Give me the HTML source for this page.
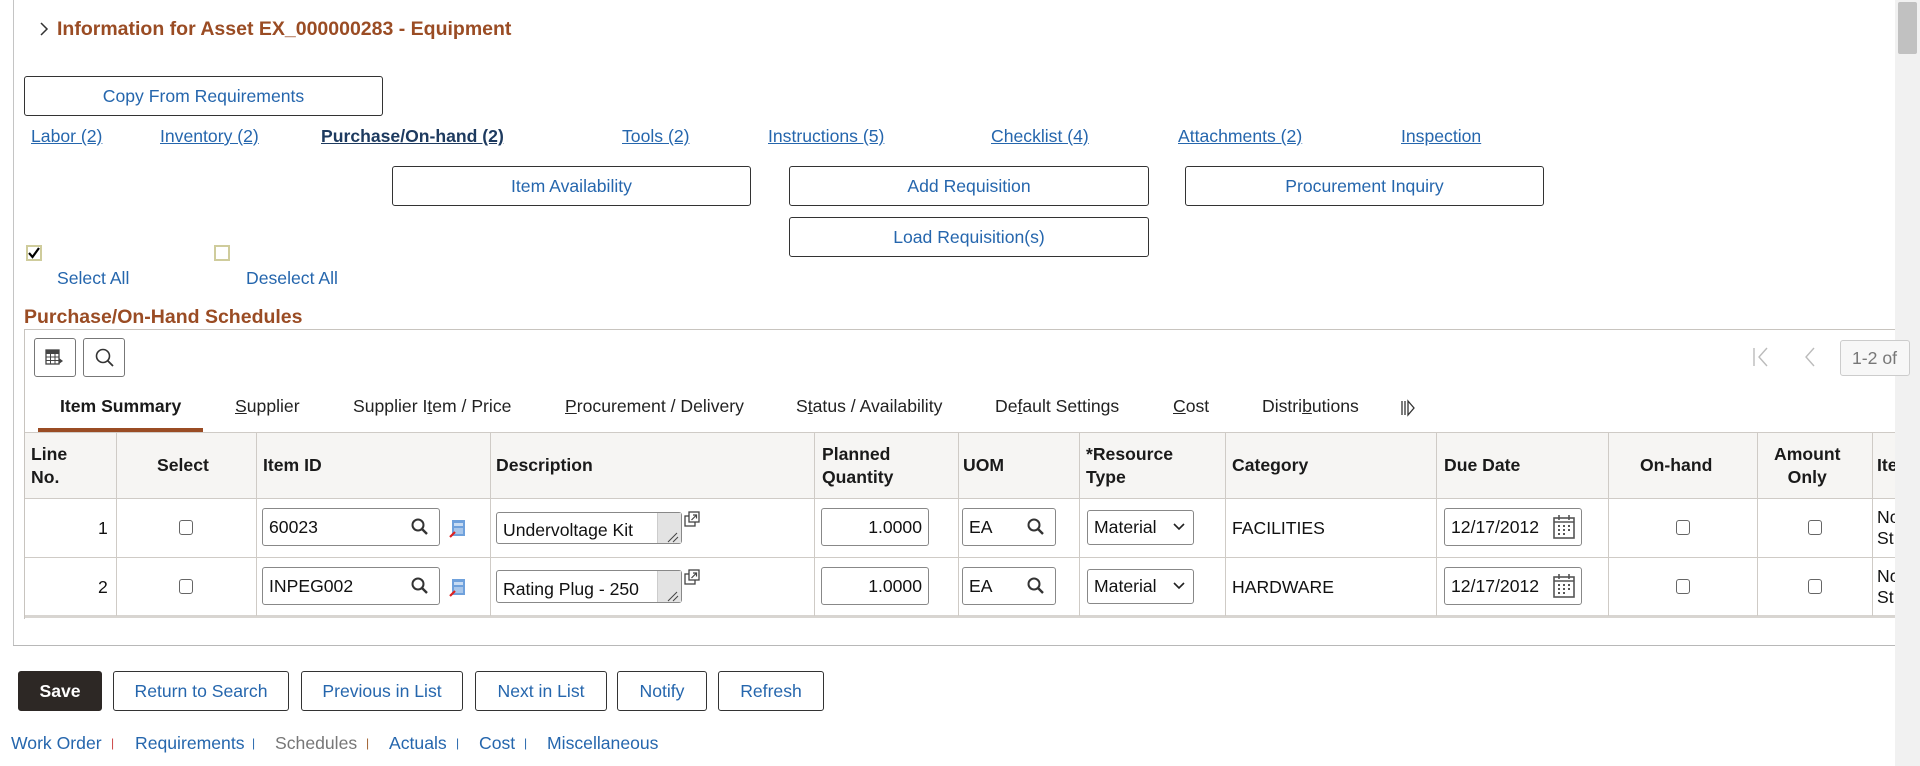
<!DOCTYPE html>
<html><head><meta charset="utf-8"><style>
*{box-sizing:border-box;margin:0;padding:0}
body{width:1920px;height:766px;overflow:hidden;background:#fff;font-family:"Liberation Sans",Arial,sans-serif;font-size:17.6px;color:#333;position:relative}
.a{position:absolute;white-space:nowrap}
.lk{color:#2566ad;text-decoration:underline}
.btn{position:absolute;border:1px solid #333;border-radius:3px;background:#fff;color:#2566ad;text-align:center;font-size:17.6px}
.brown{color:#9a4c24;font-weight:bold;font-size:19.5px}
.hd{position:absolute;font-weight:bold;color:#1a1a1a;line-height:23px}
.vl{position:absolute;width:1px;background:#cfcbc6}
.hl{position:absolute;height:1px;background:#cfcbc6}
.inp{position:absolute;border:1px solid #888;border-radius:3px;background:#fff;font-size:17.6px;color:#111;line-height:36px;padding-left:6px}
.cb{position:absolute;width:14px;height:15px;border:1.5px solid #666;border-radius:3px;background:#fff}
.tab{position:absolute;top:396px;color:#222;font-size:17.6px}
</style></head><body>
<div class="a" style="left:13px;top:0;width:1px;height:646px;background:#c4c4c4"></div>
<div class="a" style="left:13px;top:645px;width:1882px;height:1px;background:#b8b8b8"></div>
<div class="a" style="left:1895px;top:0;width:25px;height:766px;background:#f1f1f1"></div>
<div class="a" style="left:1898px;top:2px;width:19px;height:52px;background:#c1c1c1;border-radius:2px"></div>

<svg class="a" style="left:39px;top:21px" width="10" height="16"><path d="M2 2 L8 8 L2 14" fill="none" stroke="#333" stroke-width="1.5"/></svg>
<div class="a brown" style="left:57px;top:18px">Information for Asset EX_000000283 - Equipment</div>

<div class="btn" style="left:24px;top:76px;width:359px;height:40px;line-height:38px">Copy From Requirements</div>

<div class="a lk" style="left:31px;top:126px">Labor (2)</div>
<div class="a lk" style="left:160px;top:126px">Inventory (2)</div>
<div class="a lk" style="left:321px;top:126px;font-weight:bold;color:#1d3a5f">Purchase/On-hand (2)</div>
<div class="a lk" style="left:622px;top:126px">Tools (2)</div>
<div class="a lk" style="left:768px;top:126px">Instructions (5)</div>
<div class="a lk" style="left:991px;top:126px">Checklist (4)</div>
<div class="a lk" style="left:1178px;top:126px">Attachments (2)</div>
<div class="a lk" style="left:1401px;top:126px">Inspection</div>

<div class="btn" style="left:392px;top:166px;width:359px;height:40px;line-height:38px">Item Availability</div>
<div class="btn" style="left:789px;top:166px;width:360px;height:40px;line-height:38px">Add Requisition</div>
<div class="btn" style="left:1185px;top:166px;width:359px;height:40px;line-height:38px">Procurement Inquiry</div>
<div class="btn" style="left:789px;top:217px;width:360px;height:40px;line-height:38px">Load Requisition(s)</div>

<div class="a" style="left:26px;top:245px;width:16px;height:16px;border:2px solid #cfcc9c;background:#fff"></div>
<svg class="a" style="left:27px;top:246px" width="14" height="14"><path d="M2 7 L5.5 11 L12 2" fill="none" stroke="#000" stroke-width="2.2"/></svg>
<div class="a" style="left:214px;top:245px;width:16px;height:16px;border:2px solid #cfcc9c;background:#fff"></div>
<div class="a" style="left:57px;top:268px;color:#2566ad">Select All</div>
<div class="a" style="left:246px;top:268px;color:#2566ad">Deselect All</div>

<div class="a brown" style="left:24px;top:306px">Purchase/On-Hand Schedules</div>
<div class="a" style="left:24px;top:329px;width:1871px;height:1px;background:#c8c4bf"></div>
<div class="a" style="left:24px;top:329px;width:1px;height:290px;background:#c8c4bf"></div>

<div class="a" style="left:34px;top:338px;width:42px;height:39px;border:1px solid #777;border-radius:3px"></div>
<svg class="a" style="left:45px;top:348px" width="20" height="20"><rect x="1" y="2" width="13" height="14" fill="none" stroke="#444" stroke-width="1.3"/><path d="M1 5.5H14M1 9H14M1 12.5H14M5.5 2V16M10 2V16" stroke="#444" stroke-width="1"/><rect x="1" y="2" width="13" height="3" fill="#444"/><path d="M14 10 L18 13 L14 16Z" fill="#444"/></svg>
<div class="a" style="left:83px;top:338px;width:42px;height:39px;border:1px solid #777;border-radius:3px"></div>
<svg class="a" style="left:94px;top:347px" width="22" height="22"><circle cx="9" cy="9" r="6.5" fill="none" stroke="#333" stroke-width="1.6"/><path d="M13.5 13.5 L19 19" stroke="#333" stroke-width="1.8"/></svg>

<svg class="a" style="left:1752px;top:346px" width="18" height="22"><path d="M2 2V20M15 2 L7 11 L15 20" fill="none" stroke="#bbb" stroke-width="1.4"/></svg>
<svg class="a" style="left:1803px;top:346px" width="14" height="22"><path d="M11 2 L3 11 L11 20" fill="none" stroke="#bbb" stroke-width="1.4"/></svg>
<div class="a" style="left:1840px;top:340px;width:70px;height:36px;border:1px solid #ccc;border-radius:3px;background:#f7f7f7;color:#777;padding-left:11px;line-height:34px">1-2 of</div>

<div class="tab" style="left:60px;font-weight:bold;color:#1a1a1a">Item Summary</div>
<div class="a" style="left:38px;top:428px;width:165px;height:4px;background:#9a4c24"></div>
<div class="tab" style="left:235px"><u>S</u>upplier</div>
<div class="tab" style="left:353px">Supplier I<u>t</u>em / Price</div>
<div class="tab" style="left:565px"><u>P</u>rocurement / Delivery</div>
<div class="tab" style="left:796px">S<u>t</u>atus / Availability</div>
<div class="tab" style="left:995px">De<u>f</u>ault Settings</div>
<div class="tab" style="left:1173px"><u>C</u>ost</div>
<div class="tab" style="left:1262px">Distri<u>b</u>utions</div>
<svg class="a" style="left:1400px;top:399px" width="16" height="18"><path d="M2 2V16M5 2V16M8 2 L14 9 L8 16Z" fill="none" stroke="#333" stroke-width="1.3"/></svg>

<div class="a" style="left:25px;top:432px;width:1870px;height:66px;background:#f6f5f3"></div>
<div class="hl" style="left:25px;top:432px;width:1870px"></div>
<div class="hl" style="left:25px;top:498px;width:1870px"></div>
<div class="hl" style="left:25px;top:557px;width:1870px"></div>
<div class="hl" style="left:25px;top:615px;width:1870px;height:3px;background:#d8d5d1"></div>
<div class="vl" style="left:116px;top:432px;height:184px"></div>
<div class="vl" style="left:256px;top:432px;height:184px"></div>
<div class="vl" style="left:490px;top:432px;height:184px"></div>
<div class="vl" style="left:814px;top:432px;height:184px"></div>
<div class="vl" style="left:958px;top:432px;height:184px"></div>
<div class="vl" style="left:1079px;top:432px;height:184px"></div>
<div class="vl" style="left:1225px;top:432px;height:184px"></div>
<div class="vl" style="left:1436px;top:432px;height:184px"></div>
<div class="vl" style="left:1608px;top:432px;height:184px"></div>
<div class="vl" style="left:1757px;top:432px;height:184px"></div>
<div class="vl" style="left:1872px;top:432px;height:184px"></div>

<div class="hd" style="left:31px;top:443px">Line<br>No.</div>
<div class="hd" style="left:157px;top:454px">Select</div>
<div class="hd" style="left:263px;top:454px">Item ID</div>
<div class="hd" style="left:496px;top:454px">Description</div>
<div class="hd" style="left:822px;top:443px">Planned<br>Quantity</div>
<div class="hd" style="left:963px;top:454px">UOM</div>
<div class="hd" style="left:1086px;top:443px">*Resource<br>Type</div>
<div class="hd" style="left:1232px;top:454px">Category</div>
<div class="hd" style="left:1444px;top:454px">Due Date</div>
<div class="hd" style="left:1640px;top:454px">On-hand</div>
<div class="hd" style="left:1774px;top:443px;text-align:center">Amount<br>Only</div>
<div class="hd" style="left:1877px;top:454px;width:18px;overflow:hidden">Item</div>

<!-- row 1 -->
<div class="a" style="left:98px;top:518px;color:#111">1</div>
<div class="cb" style="left:179px;top:520px"></div>
<div class="inp" style="left:262px;top:508px;width:178px;height:38px">60023</div>
<svg class="a" style="left:410px;top:517px" width="20" height="20"><circle cx="8" cy="8" r="5.5" fill="none" stroke="#333" stroke-width="2"/><path d="M12 12 L17 17" stroke="#333" stroke-width="2.4"/></svg>
<svg class="a" style="left:449px;top:519px" width="17" height="19"><rect x="3" y="1" width="13" height="16" fill="#6fa1dc"/><rect x="5" y="4" width="9" height="3" fill="#c8dcf3"/><rect x="5" y="9" width="9" height="6" fill="#a8c6ea"/><path d="M1 18 L6 13" stroke="#d22" stroke-width="2.2"/></svg>
<div class="inp" style="left:496px;top:512px;width:186px;height:32px;line-height:34px;font-size:17.6px">Undervoltage Kit</div>
<div class="a" style="left:657px;top:513px;width:24px;height:30px;background:#e3e3e3;border-left:1px solid #ccc"></div>
<svg class="a" style="left:666px;top:531px" width="14" height="12"><path d="M2 11 L11 2M7 11 L12 6" stroke="#444" stroke-width="1"/></svg>
<svg class="a" style="left:684px;top:511px" width="17" height="17"><rect x="1" y="5" width="10" height="10" fill="#fff" stroke="#444" stroke-width="1.3"/><rect x="5" y="1" width="10" height="10" fill="#fff" stroke="#444" stroke-width="1.3"/><path d="M7.5 9 L12.5 4M9 4H12.5V7.5" fill="none" stroke="#444" stroke-width="1.2"/></svg>
<div class="inp" style="left:821px;top:508px;width:108px;height:38px;text-align:right;padding-right:6px">1.0000</div>
<div class="inp" style="left:962px;top:508px;width:94px;height:38px">EA</div>
<svg class="a" style="left:1026px;top:517px" width="20" height="20"><circle cx="8" cy="8" r="5.5" fill="none" stroke="#333" stroke-width="2"/><path d="M12 12 L17 17" stroke="#333" stroke-width="2.4"/></svg>
<div class="inp" style="left:1087px;top:510px;width:107px;height:35px;line-height:33px">Material</div>
<svg class="a" style="left:1173px;top:522px" width="12" height="10"><path d="M1 2 L6 7 L11 2" fill="none" stroke="#222" stroke-width="1.6"/></svg>
<div class="a" style="left:1232px;top:518px;color:#111">FACILITIES</div>
<div class="inp" style="left:1444px;top:508px;width:138px;height:38px">12/17/2012</div>
<svg class="a" style="left:1552px;top:513px" width="24" height="28"><rect x="2" y="5" width="20" height="20" fill="none" stroke="#555" stroke-width="1.6"/><path d="M2 9H22M7 2V7M17 2V7" stroke="#555" stroke-width="1.6"/><g fill="#555"><rect x="6" y="12" width="2" height="2"/><rect x="11" y="12" width="2" height="2"/><rect x="16" y="12" width="2" height="2"/><rect x="6" y="16" width="2" height="2"/><rect x="11" y="16" width="2" height="2"/><rect x="16" y="16" width="2" height="2"/><rect x="6" y="20" width="2" height="2"/><rect x="11" y="20" width="2" height="2"/></g></svg>
<div class="cb" style="left:1676px;top:520px"></div>
<div class="cb" style="left:1808px;top:520px"></div>
<div class="a" style="left:1877px;top:507px;width:18px;overflow:hidden;color:#111;line-height:21px">No<br>St</div>

<!-- row 2 -->
<div class="a" style="left:98px;top:577px;color:#111">2</div>
<div class="cb" style="left:179px;top:579px"></div>
<div class="inp" style="left:262px;top:567px;width:178px;height:38px">INPEG002</div>
<svg class="a" style="left:410px;top:576px" width="20" height="20"><circle cx="8" cy="8" r="5.5" fill="none" stroke="#333" stroke-width="2"/><path d="M12 12 L17 17" stroke="#333" stroke-width="2.4"/></svg>
<svg class="a" style="left:449px;top:578px" width="17" height="19"><rect x="3" y="1" width="13" height="16" fill="#6fa1dc"/><rect x="5" y="4" width="9" height="3" fill="#c8dcf3"/><rect x="5" y="9" width="9" height="6" fill="#a8c6ea"/><path d="M1 18 L6 13" stroke="#d22" stroke-width="2.2"/></svg>
<div class="inp" style="left:496px;top:570px;width:186px;height:33px;line-height:36px;font-size:17.6px">Rating Plug - 250</div>
<div class="a" style="left:657px;top:571px;width:24px;height:31px;background:#e3e3e3;border-left:1px solid #ccc"></div>
<svg class="a" style="left:666px;top:590px" width="14" height="12"><path d="M2 11 L11 2M7 11 L12 6" stroke="#444" stroke-width="1"/></svg>
<svg class="a" style="left:684px;top:569px" width="17" height="17"><rect x="1" y="5" width="10" height="10" fill="#fff" stroke="#444" stroke-width="1.3"/><rect x="5" y="1" width="10" height="10" fill="#fff" stroke="#444" stroke-width="1.3"/><path d="M7.5 9 L12.5 4M9 4H12.5V7.5" fill="none" stroke="#444" stroke-width="1.2"/></svg>
<div class="inp" style="left:821px;top:567px;width:108px;height:38px;text-align:right;padding-right:6px">1.0000</div>
<div class="inp" style="left:962px;top:567px;width:94px;height:38px">EA</div>
<svg class="a" style="left:1026px;top:576px" width="20" height="20"><circle cx="8" cy="8" r="5.5" fill="none" stroke="#333" stroke-width="2"/><path d="M12 12 L17 17" stroke="#333" stroke-width="2.4"/></svg>
<div class="inp" style="left:1087px;top:569px;width:107px;height:35px;line-height:33px">Material</div>
<svg class="a" style="left:1173px;top:581px" width="12" height="10"><path d="M1 2 L6 7 L11 2" fill="none" stroke="#222" stroke-width="1.6"/></svg>
<div class="a" style="left:1232px;top:577px;color:#111">HARDWARE</div>
<div class="inp" style="left:1444px;top:567px;width:138px;height:38px">12/17/2012</div>
<svg class="a" style="left:1552px;top:572px" width="24" height="28"><rect x="2" y="5" width="20" height="20" fill="none" stroke="#555" stroke-width="1.6"/><path d="M2 9H22M7 2V7M17 2V7" stroke="#555" stroke-width="1.6"/><g fill="#555"><rect x="6" y="12" width="2" height="2"/><rect x="11" y="12" width="2" height="2"/><rect x="16" y="12" width="2" height="2"/><rect x="6" y="16" width="2" height="2"/><rect x="11" y="16" width="2" height="2"/><rect x="16" y="16" width="2" height="2"/><rect x="6" y="20" width="2" height="2"/><rect x="11" y="20" width="2" height="2"/></g></svg>
<div class="cb" style="left:1676px;top:579px"></div>
<div class="cb" style="left:1808px;top:579px"></div>
<div class="a" style="left:1877px;top:566px;width:18px;overflow:hidden;color:#111;line-height:21px">No<br>St</div>

<!-- footer -->
<div class="btn" style="left:18px;top:671px;width:84px;height:40px;line-height:38px;background:#2d2825;color:#fff;font-weight:bold;border-color:#2d2825">Save</div>
<div class="btn" style="left:113px;top:671px;width:176px;height:40px;line-height:38px">Return to Search</div>
<div class="btn" style="left:301px;top:671px;width:162px;height:40px;line-height:38px">Previous in List</div>
<div class="btn" style="left:475px;top:671px;width:132px;height:40px;line-height:38px">Next in List</div>
<div class="btn" style="left:617px;top:671px;width:90px;height:40px;line-height:38px">Notify</div>
<div class="btn" style="left:718px;top:671px;width:106px;height:40px;line-height:38px">Refresh</div>

<div class="a" style="left:11px;top:733px;color:#2566ad">Work Order</div>
<div class="a" style="left:111px;top:736px;color:#c44;font-size:12px">|</div>
<div class="a" style="left:135px;top:733px;color:#2566ad">Requirements</div>
<div class="a" style="left:252px;top:736px;color:#2566ad;font-size:12px">|</div>
<div class="a" style="left:275px;top:733px;color:#777">Schedules</div>
<div class="a" style="left:366px;top:736px;color:#a0602e;font-size:12px">|</div>
<div class="a" style="left:389px;top:733px;color:#2566ad">Actuals</div>
<div class="a" style="left:456px;top:736px;color:#2566ad;font-size:12px">|</div>
<div class="a" style="left:479px;top:733px;color:#2566ad">Cost</div>
<div class="a" style="left:524px;top:736px;color:#2566ad;font-size:12px">|</div>
<div class="a" style="left:547px;top:733px;color:#2566ad">Miscellaneous</div>
</body></html>
